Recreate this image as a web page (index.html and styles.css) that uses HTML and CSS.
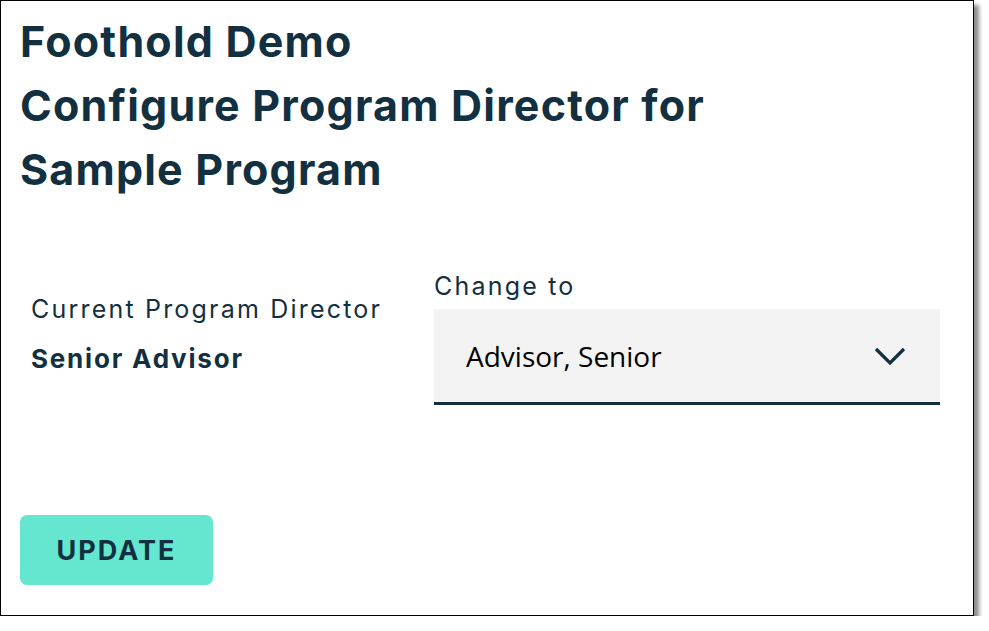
FILE: index.html
```html
<!DOCTYPE html>
<html lang="en">
<head>
  <meta charset="UTF-8">
  <title>Configure Program Director</title>
  <link rel="stylesheet" href="styles.css">
</head>
<body>
  <div class="frame">
    <h1 class="title">
      Foothold Demo<br>
      Configure Program Director for<br>
      Sample Program
    </h1>

    <div class="director">
      <div class="current">
        <div class="label">Current Program Director</div>
        <div class="name">Senior Advisor</div>
      </div>
      <div class="change">
        <label class="label" for="director">Change to</label>
        <div class="select-wrap">
          <select id="director" class="select">
            <option selected>Advisor, Senior</option>
          </select>
          <svg class="chevron" width="32" height="20" viewBox="0 0 32 20">
            <polyline points="2,2 16,16 30,2" fill="none" stroke="#12303f" stroke-width="3.2"/>
          </svg>
        </div>
      </div>
    </div>

    <button class="button">UPDATE</button>
  </div>
</body>
</html>
```

FILE: styles.css
```css
body {
  margin: 0;
  background: #fff;
  font-family: Inter, Lato, Arial, sans-serif;
  color: #12303f;
}

.frame {
  box-sizing: border-box;
  width: 974px;
  height: 616px;
  border: 1px solid #000;
  background: #fff;
  box-shadow: 5px 5px 4px rgba(0,0,0,0.45);
  padding: 0 19px;
  display: flex;
  flex-direction: column;
  align-items: flex-start;
}

.title {
  margin: 8px 0 0 0;
  font-size: 43px;
  line-height: 64px;
  font-weight: 700;
  letter-spacing: 1.2px;
}

.director {
  display: flex;
  align-items: center;
  margin-top: 70px;
  width: 100%;
}

.current {
  width: 414px;
  padding-left: 11px;
  padding-bottom: 9px;
  box-sizing: border-box;
}

.label {
  display: block;
  font-size: 25px;
  letter-spacing: 2.2px;
  color: #12303f;
}

.name {
  margin-top: 19px;
  font-size: 26px;
  font-weight: 700;
  letter-spacing: 1.8px;
}

.change {
  width: 506px;
}

.select-wrap {
  position: relative;
  margin-top: 8px;
}

.select {
  appearance: none;
  width: 100%;
  height: 96px;
  border: none;
  border-bottom: 3px solid #12303f;
  border-radius: 0;
  background: #f2f3f2;
  padding: 0 32px;
  font-family: "Open Sans", "Noto Sans", sans-serif;
  font-size: 28px;
  color: #000;
  outline: none;
}

.chevron {
  position: absolute;
  right: 34px;
  top: 38px;
  pointer-events: none;
}

.button {
  margin-top: auto;
  margin-bottom: 30px;
  width: 193px;
  height: 70px;
  border: none;
  border-radius: 7px;
  background: #64e6cf;
  color: #12303f;
  font-family: Inter, Lato, Arial, sans-serif;
  font-size: 27px;
  font-weight: 700;
  letter-spacing: 2px;
  cursor: pointer;
}
```
